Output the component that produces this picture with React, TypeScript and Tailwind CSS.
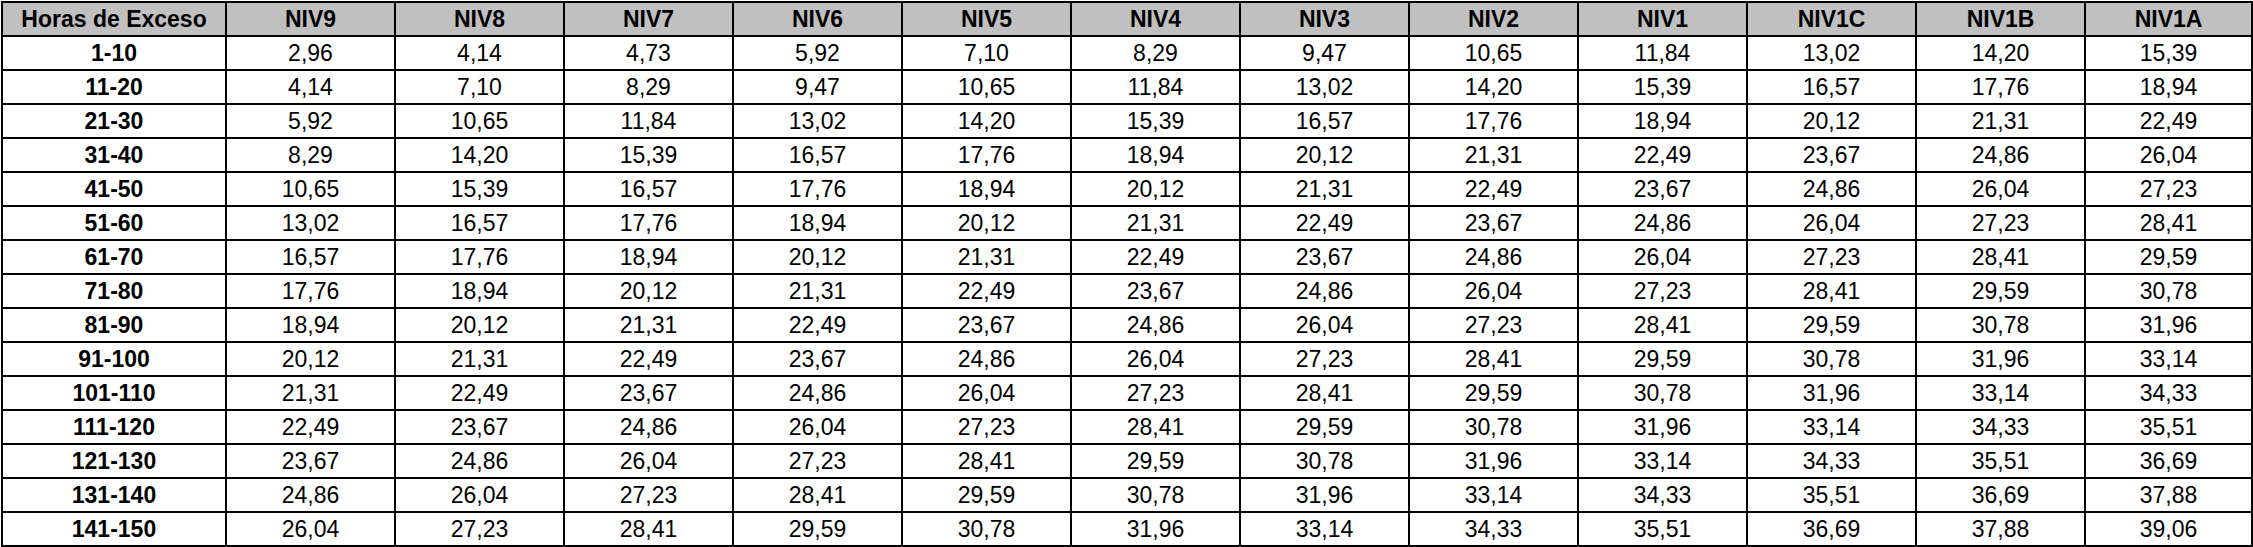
import React from "react";

const headers = ["NIV9","NIV8","NIV7","NIV6","NIV5","NIV4","NIV3","NIV2","NIV1","NIV1C","NIV1B","NIV1A"];

const rows: [string, string[]][] = [
  ["1-10", ["2,96","4,14","4,73","5,92","7,10","8,29","9,47","10,65","11,84","13,02","14,20","15,39"]],
  ["11-20", ["4,14","7,10","8,29","9,47","10,65","11,84","13,02","14,20","15,39","16,57","17,76","18,94"]],
  ["21-30", ["5,92","10,65","11,84","13,02","14,20","15,39","16,57","17,76","18,94","20,12","21,31","22,49"]],
  ["31-40", ["8,29","14,20","15,39","16,57","17,76","18,94","20,12","21,31","22,49","23,67","24,86","26,04"]],
  ["41-50", ["10,65","15,39","16,57","17,76","18,94","20,12","21,31","22,49","23,67","24,86","26,04","27,23"]],
  ["51-60", ["13,02","16,57","17,76","18,94","20,12","21,31","22,49","23,67","24,86","26,04","27,23","28,41"]],
  ["61-70", ["16,57","17,76","18,94","20,12","21,31","22,49","23,67","24,86","26,04","27,23","28,41","29,59"]],
  ["71-80", ["17,76","18,94","20,12","21,31","22,49","23,67","24,86","26,04","27,23","28,41","29,59","30,78"]],
  ["81-90", ["18,94","20,12","21,31","22,49","23,67","24,86","26,04","27,23","28,41","29,59","30,78","31,96"]],
  ["91-100", ["20,12","21,31","22,49","23,67","24,86","26,04","27,23","28,41","29,59","30,78","31,96","33,14"]],
  ["101-110", ["21,31","22,49","23,67","24,86","26,04","27,23","28,41","29,59","30,78","31,96","33,14","34,33"]],
  ["111-120", ["22,49","23,67","24,86","26,04","27,23","28,41","29,59","30,78","31,96","33,14","34,33","35,51"]],
  ["121-130", ["23,67","24,86","26,04","27,23","28,41","29,59","30,78","31,96","33,14","34,33","35,51","36,69"]],
  ["131-140", ["24,86","26,04","27,23","28,41","29,59","30,78","31,96","33,14","34,33","35,51","36,69","37,88"]],
  ["141-150", ["26,04","27,23","28,41","29,59","30,78","31,96","33,14","34,33","35,51","36,69","37,88","39,06"]],
];

export default function App() {
  return (
    <div className="w-[2253px] h-[547px] bg-white pt-px pl-px" style={{ fontFamily: '"Liberation Sans", Arial, sans-serif' }}>
      <table className="table-fixed border-collapse w-[2251px] text-[23px] leading-none text-black">
        <colgroup>
          <col className="w-[224px]" />
          {headers.map((h, i) => (
            <col key={h} className={i === headers.length - 1 ? "w-[167px]" : "w-[169px]"} />
          ))}
        </colgroup>
        <thead>
          <tr className="h-[34px] bg-[#c0c0c0]">
            <th className="border-2 border-black font-bold text-center p-0">Horas de Exceso</th>
            {headers.map((h) => (
              <th key={h} className="border-2 border-black font-bold text-center p-0">{h}</th>
            ))}
          </tr>
        </thead>
        <tbody>
          {rows.map(([label, vals]) => (
            <tr key={label} className="h-[34px]">
              <td className="border-2 border-black font-bold text-center p-0">{label}</td>
              {vals.map((v, i) => (
                <td key={i} className="border-2 border-black text-center p-0">{v}</td>
              ))}
            </tr>
          ))}
        </tbody>
      </table>
    </div>
  );
}
